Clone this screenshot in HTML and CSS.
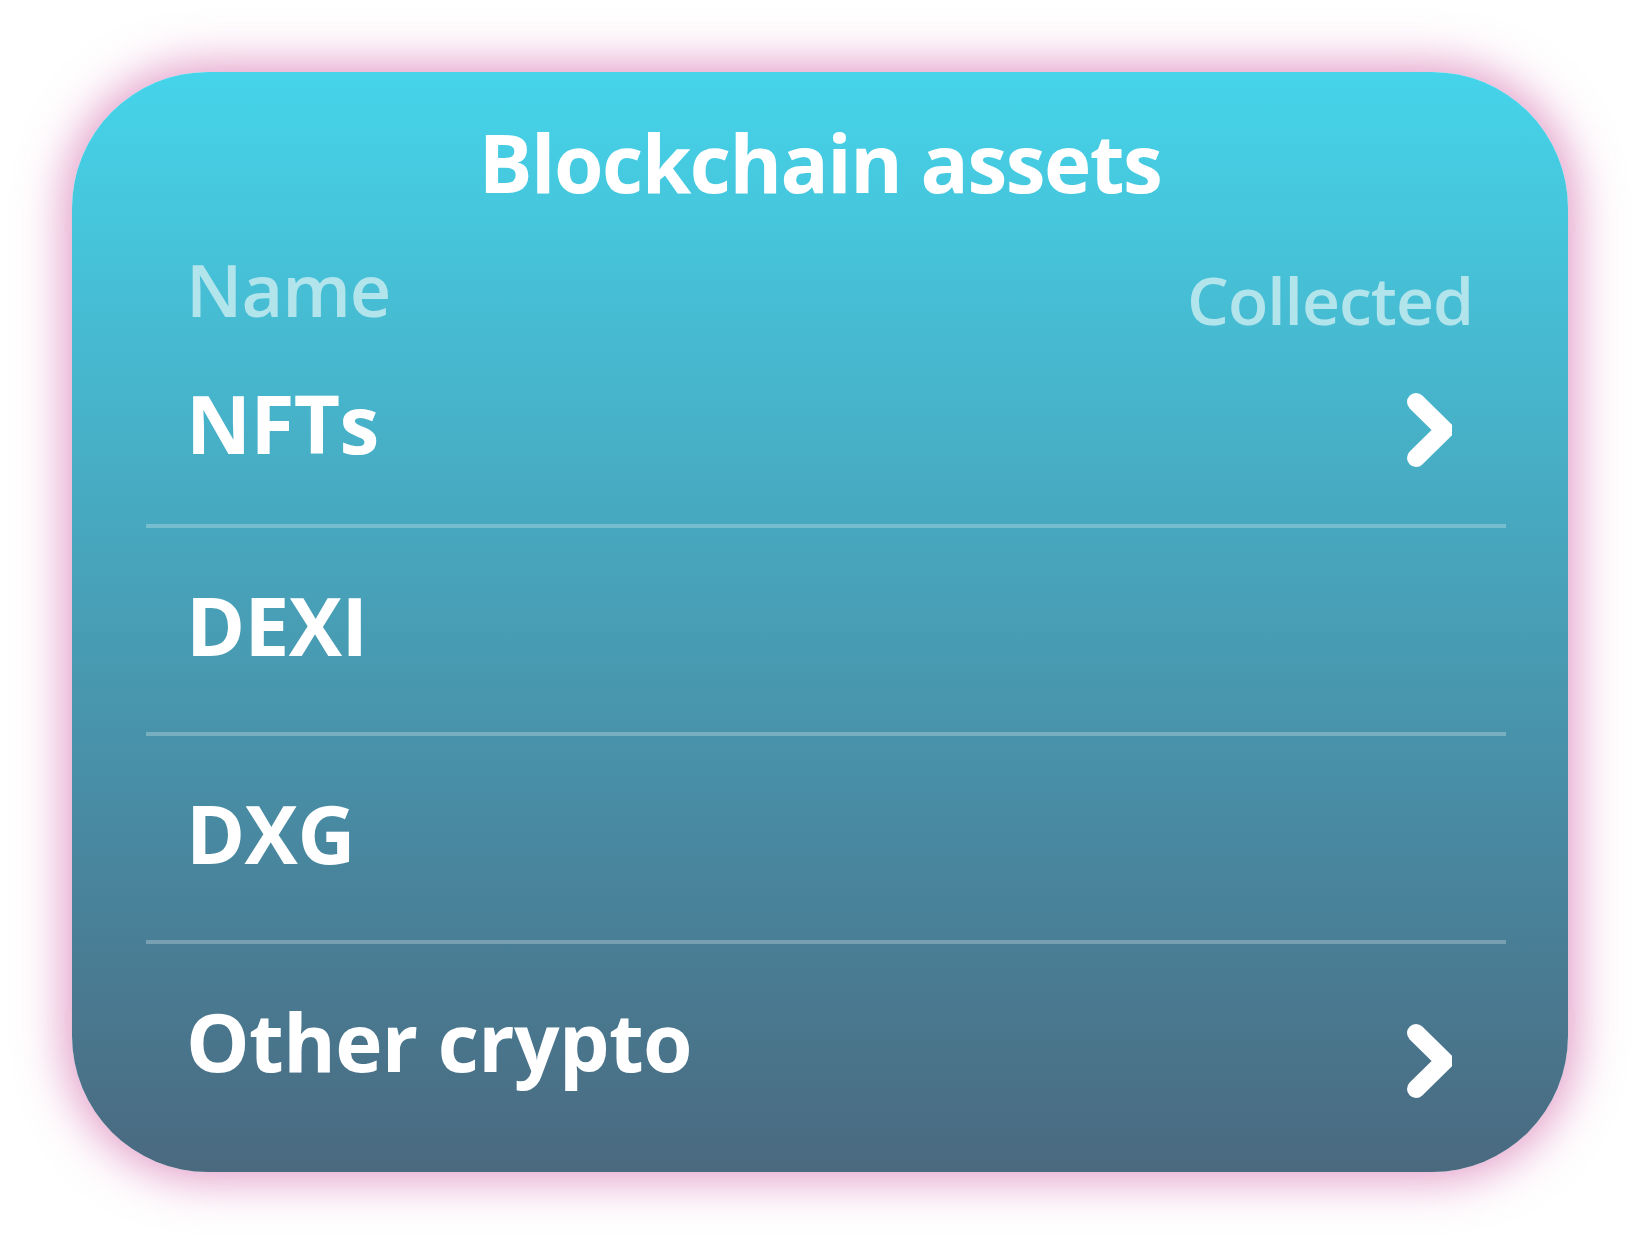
FILE: index.html
```html
<!DOCTYPE html>
<html lang="en">
<head>
<meta charset="utf-8">
<title>Blockchain assets</title>
<link rel="stylesheet" href="styles.css">
</head>
<body>
<div class="page">
  <section class="card">
    <h1 class="title">Blockchain assets</h1>
    <div class="header">
      <span class="col-name">Name</span>
      <span class="col-collected">Collected</span>
    </div>
    <div class="row row-first">
      <span class="label">NFTs</span>
      <svg class="chev chev-first" viewBox="0 0 45 74" width="45" height="74" aria-hidden="true">
        <path d="M9 9 L37.5 37 L9 65" fill="none" stroke="#ffffff" stroke-width="18" stroke-linecap="round" stroke-linejoin="miter"/>
      </svg>
    </div>
    <div class="divider"></div>
    <div class="row">
      <span class="label">DEXI</span>
    </div>
    <div class="divider"></div>
    <div class="row">
      <span class="label">DXG</span>
    </div>
    <div class="divider"></div>
    <div class="row">
      <span class="label">Other crypto</span>
      <svg class="chev chev-last" viewBox="0 0 45 74" width="45" height="74" aria-hidden="true">
        <path d="M9 9 L37.5 37 L9 65" fill="none" stroke="#ffffff" stroke-width="18" stroke-linecap="round" stroke-linejoin="miter"/>
      </svg>
    </div>
  </section>
</div>
</body>
</html>
```

FILE: styles.css
```css
html, body {
  margin: 0;
  padding: 0;
  background: #ffffff;
}

body {
  width: 1640px;
  height: 1244px;
  font-family: "Open Sans", "Noto Sans", "Liberation Sans", sans-serif;
}

.page {
  padding: 72px 0 0 72px;
}

.card {
  box-sizing: border-box;
  width: 1496px;
  height: 1100px;
  border-radius: 136px;
  background: linear-gradient(180deg, #45d4ea 0%, #47a9c0 40%, #4888a0 70%, #4a697f 100%);
  box-shadow: 0 0 48px 6px rgba(215, 118, 178, 0.78);
  padding: 50px 62px 24px 74px;
  color: #ffffff;
}

.title {
  margin: 0;
  font-size: 80px;
  line-height: 80px;
  font-weight: 700;
  letter-spacing: -1.5px;
  text-align: center;
  margin-left: -12px;
}

.header {
  display: flex;
  justify-content: space-between;
  align-items: flex-start;
  margin-top: 51px;
  padding: 0 33px 0 40px;
  color: #b2e4ec;
  font-weight: 600;
}

.col-name {
  font-size: 72px;
  line-height: 72px;
  letter-spacing: -1px;
}

.col-collected {
  font-size: 66px;
  line-height: 66px;
  padding-top: 13px;
  letter-spacing: -1px;
}

.row {
  box-sizing: border-box;
  height: 204px;
  display: flex;
  align-items: center;
  justify-content: space-between;
  padding: 0 54px 10px 40px;
}

.row-first {
  height: 192px;
}

.label {
  font-size: 80px;
  line-height: 80px;
  font-weight: 700;
  letter-spacing: -0.6px;
}

.chev {
  display: block;
  flex: none;
}

.chev-first {
  margin-top: 14px;
}

.chev-last {
  margin-top: 40px;
}

.divider {
  height: 4px;
  background: rgba(255, 255, 255, 0.26);
}
```
